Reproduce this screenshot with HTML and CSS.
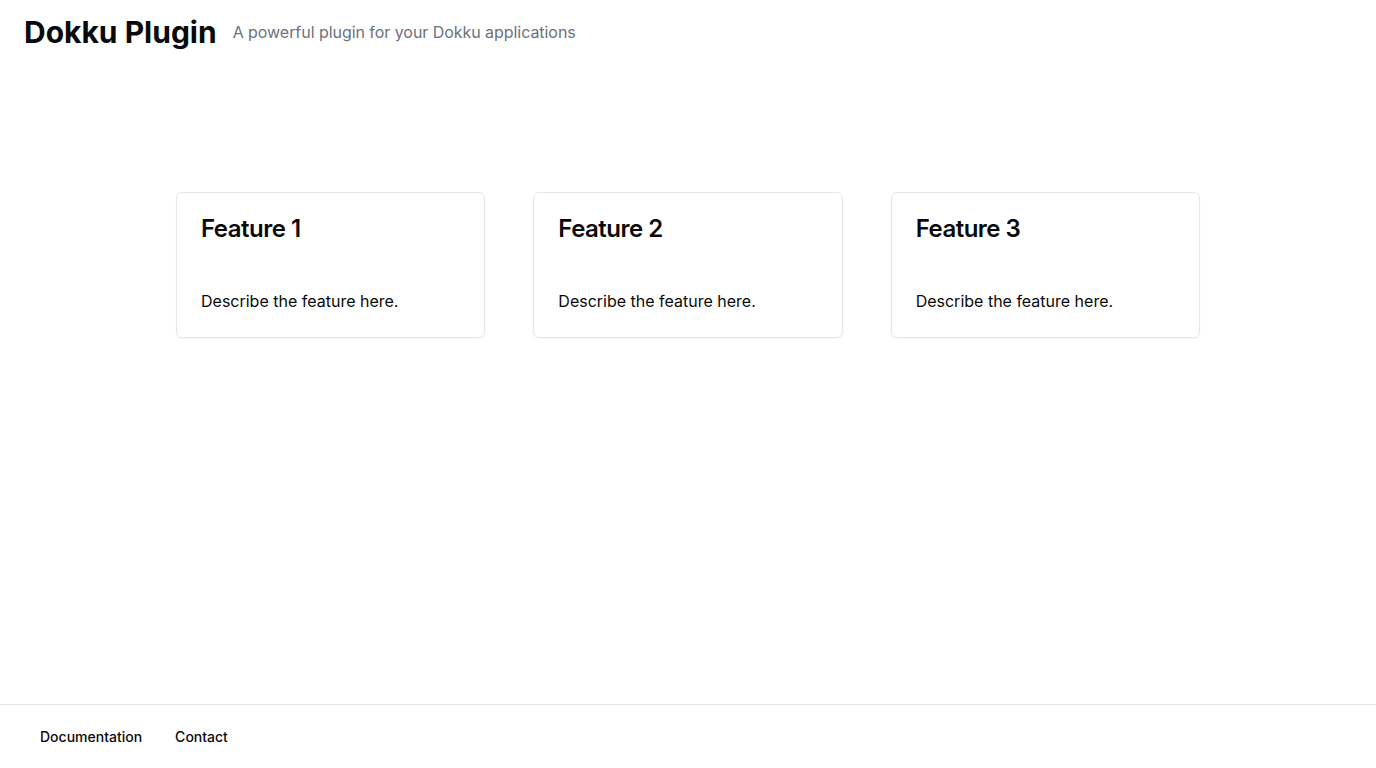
FILE: index.html
```html
<!DOCTYPE html>
<html lang="en">
<head>
<meta charset="utf-8">
<title>Dokku Plugin</title>
<link rel="stylesheet" href="styles.css">
</head>
<body>
<div class="page">
  <header class="header">
    <h1 class="title">Dokku Plugin</h1>
    <p class="subtitle">A powerful plugin for your Dokku applications</p>
  </header>
  <main class="main">
    <div class="grid">
      <div class="card">
        <h2 class="card-title">Feature 1</h2>
        <p class="card-text">Describe the feature here.</p>
      </div>
      <div class="card">
        <h2 class="card-title">Feature 2</h2>
        <p class="card-text">Describe the feature here.</p>
      </div>
      <div class="card">
        <h2 class="card-title">Feature 3</h2>
        <p class="card-text">Describe the feature here.</p>
      </div>
    </div>
  </main>
  <footer class="footer">
    <a class="footer-link" href="#">Documentation</a>
    <a class="footer-link" href="#">Contact</a>
  </footer>
</div>
</body>
</html>
```
FILE: styles.css
```css
* { box-sizing: border-box; }
html, body { margin: 0; padding: 0; }
body {
  font-family: Inter, "Noto Sans", sans-serif;
  color: #0a0a0a;
  background: #ffffff;
}
.page {
  min-height: 100vh;
  display: flex;
  flex-direction: column;
}
.header {
  display: flex;
  align-items: center;
  gap: 16px;
  padding: 14px 24px;
}
.title {
  margin: 0;
  font-size: 30px;
  line-height: 36px;
  font-weight: 700;
}
.subtitle {
  margin: 0;
  font-size: 16px;
  line-height: 24px;
  color: #6b7280;
  letter-spacing: -0.05px;
}
.main {
  flex: 1;
  padding-top: 128px;
}
.grid {
  max-width: 1024px;
  margin: 0 auto;
  display: grid;
  grid-template-columns: repeat(3, 1fr);
  gap: 48px;
}
.card {
  border: 1px solid #e5e7eb;
  border-radius: 6px;
  padding: 20px 24px 24px;
  box-shadow: 0 1px 2px rgba(0,0,0,0.04);
}
.card-title {
  margin: 0 0 44px;
  font-size: 24px;
  line-height: 32px;
  font-weight: 600;
  letter-spacing: -0.5px;
}
.card-text {
  margin: 0;
  font-size: 16px;
  line-height: 24px;
}
.footer {
  border-top: 1px solid #e5e7eb;
  height: 64px;
  display: flex;
  align-items: center;
  padding: 0 24px;
}
.footer-link {
  padding: 0 16px;
  font-size: 14px;
  font-weight: 500;
  color: #0a0a0a;
  text-decoration: none;
}
.footer-link + .footer-link {
  margin-left: 1px;
}
```
